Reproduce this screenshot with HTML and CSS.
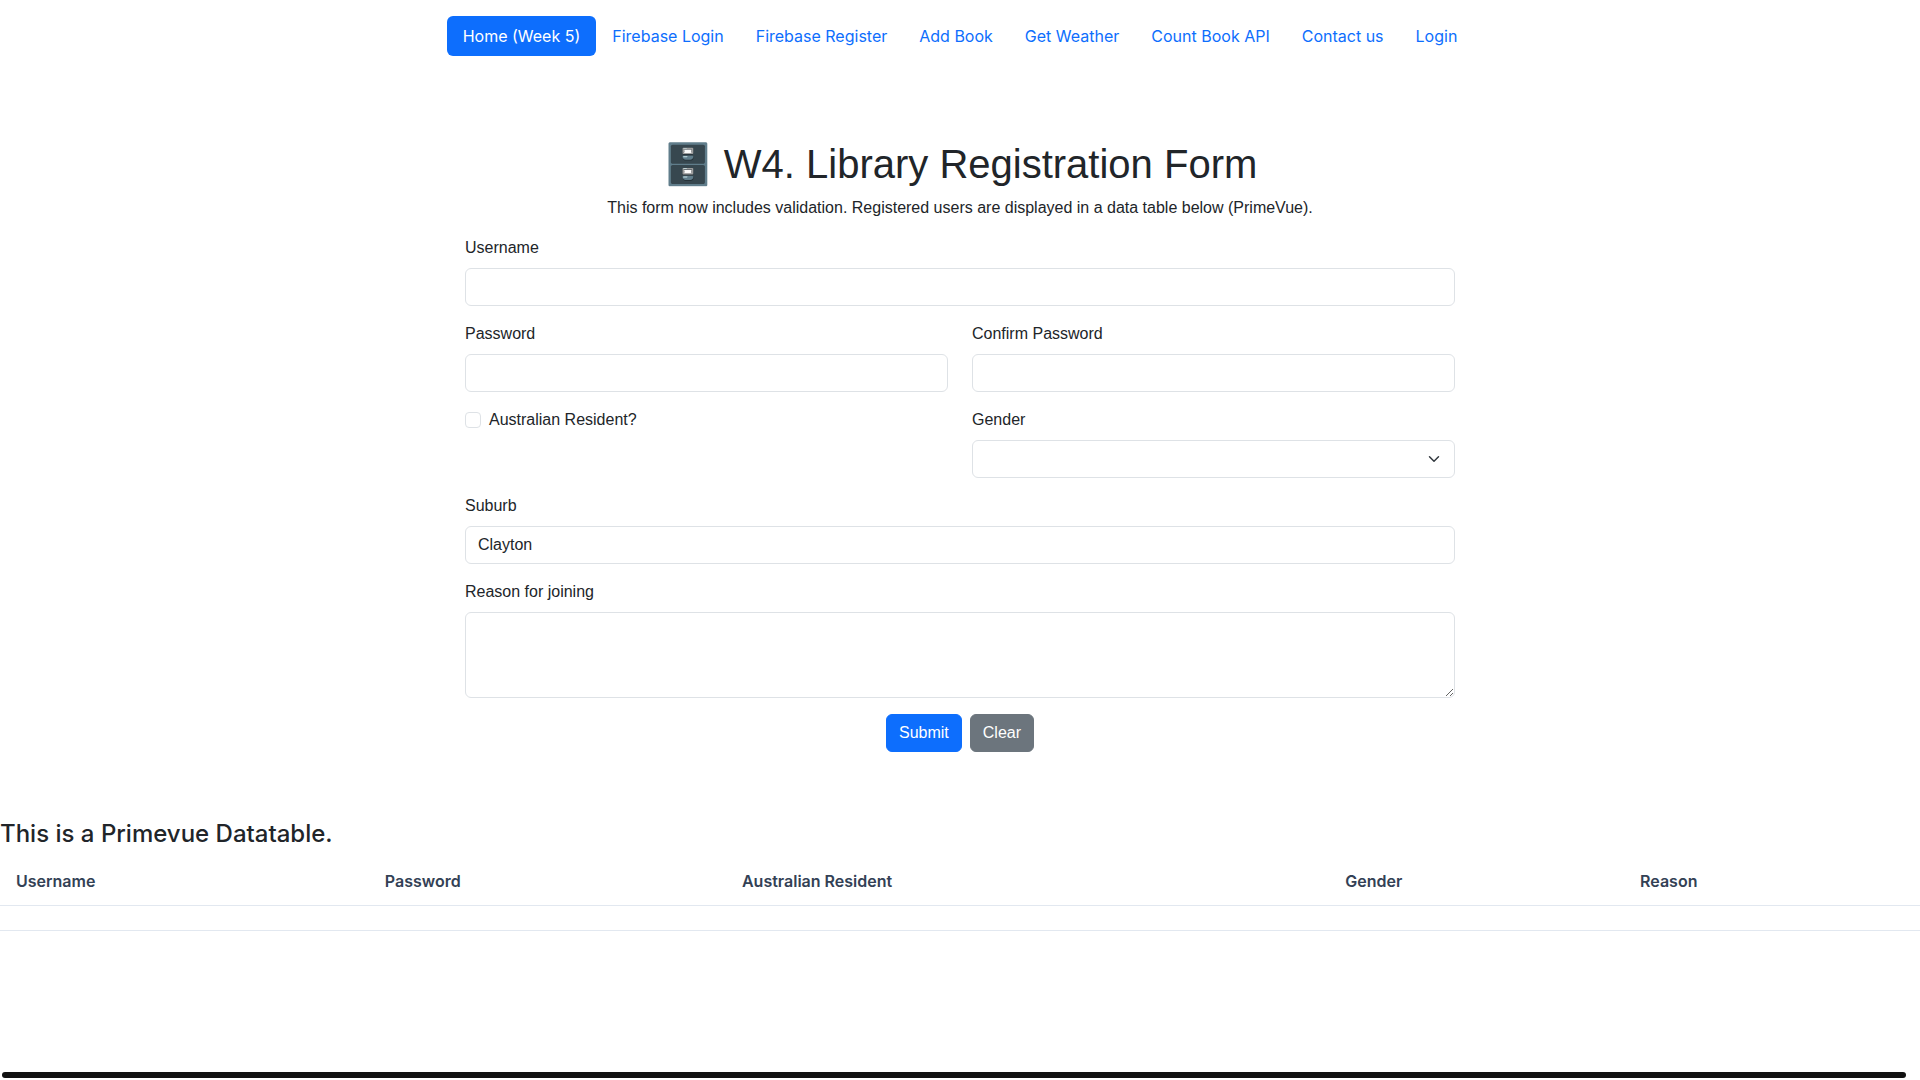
FILE: index.html
```html
<!DOCTYPE html>
<html lang="en">
<head>
  <meta charset="UTF-8" />
  <meta name="viewport" content="width=device-width, initial-scale=1.0" />
  <title>Library Registration Form</title>
  <link rel="stylesheet" href="styles.css">
</head>
<body>
  <header>
    <nav class="nav">
      <a class="nav-link active" href="#" aria-current="page">Home (Week 5)</a>
      <a class="nav-link" href="#">Firebase Login</a>
      <a class="nav-link" href="#">Firebase Register</a>
      <a class="nav-link" href="#">Add Book</a>
      <a class="nav-link" href="#">Get Weather</a>
      <a class="nav-link" href="#">Count Book API</a>
      <a class="nav-link" href="#">Contact us</a>
      <a class="nav-link" href="#">Login</a>
    </nav>
  </header>

  <main>
    <section class="registration">
      <h1>🗄️ W4. Library Registration Form</h1>
      <p class="intro">This form now includes validation. Registered users are displayed in a data table below (PrimeVue).</p>

      <form class="form" onsubmit="return false">
        <div class="field full">
          <label for="username">Username</label>
          <input type="text" class="form-control" id="username">
        </div>

        <div class="field">
          <label for="password">Password</label>
          <input type="password" class="form-control" id="password">
        </div>
        <div class="field">
          <label for="confirm-password">Confirm Password</label>
          <input type="password" class="form-control" id="confirm-password">
        </div>

        <div class="check">
          <input type="checkbox" class="check-input" id="resident">
          <label for="resident">Australian Resident?</label>
        </div>
        <div class="field">
          <label for="gender">Gender</label>
          <select class="form-control form-select" id="gender">
            <option value="" hidden></option>
            <option value="female">Female</option>
            <option value="male">Male</option>
            <option value="other">Other</option>
          </select>
        </div>

        <div class="field full">
          <label for="suburb">Suburb</label>
          <input type="text" class="form-control" id="suburb" value="Clayton">
        </div>

        <div class="field full">
          <label for="reason">Reason for joining</label>
          <textarea class="form-control" id="reason" rows="3"></textarea>
        </div>

        <div class="actions full">
          <button type="submit" class="btn primary">Submit</button>
          <button type="reset" class="btn secondary">Clear</button>
        </div>
      </form>
    </section>

    <section class="users">
      <h4>This is a Primevue Datatable.</h4>
      <table class="datatable">
        <thead>
          <tr>
            <th>Username</th>
            <th>Password</th>
            <th>Australian Resident</th>
            <th>Gender</th>
            <th>Reason</th>
          </tr>
        </thead>
        <tbody>
          <tr>
            <td colspan="5"></td>
          </tr>
        </tbody>
      </table>
    </section>
  </main>

  <div class="scroll-thumb" aria-hidden="true"></div>
</body>
</html>
```

FILE: styles.css
```css
* {
  box-sizing: border-box;
}

body {
  margin: 0;
  background: #fff;
  color: #212529;
  font-family: Inter, sans-serif;
  font-size: 16px;
  line-height: 24px;
  text-rendering: optimizeLegibility;
  -webkit-font-smoothing: antialiased;
}

.nav {
  display: flex;
  flex-wrap: wrap;
  justify-content: center;
  padding: 16px 0;
}

.nav-link {
  padding: 8px 16px;
  border-radius: 6px;
  color: #0d6efd;
  text-decoration: none;
}

.nav-link.active {
  background: #0d6efd;
  color: #fff;
}

/* registration form */
.registration {
  max-width: 1014px;
  margin: 68px auto 0;
  padding: 0 12px;
  font-family: "Liberation Sans", Arial, sans-serif;
}

h1 {
  margin: 0 0 8px;
  font-size: 40px;
  font-weight: 500;
  line-height: 48px;
  text-align: center;
}

.intro {
  margin: 0 0 16px;
  text-align: center;
}

.form {
  display: grid;
  grid-template-columns: 1fr 1fr;
  gap: 16px 24px;
}

.full {
  grid-column: 1 / -1;
}

.field {
  display: flex;
  flex-direction: column;
  gap: 8px;
}

.form-control {
  display: block;
  width: 100%;
  padding: 6px 12px;
  border: 1px solid #dee2e6;
  border-radius: 6px;
  background-color: #fff;
  color: #212529;
  font: inherit;
}

textarea.form-control {
  resize: vertical;
}

textarea::-webkit-scrollbar {
  width: 8px;
  height: 8px;
}

.form-select {
  height: 38px;
  appearance: none;
  background-image: url("data:image/svg+xml,%3csvg xmlns='http://www.w3.org/2000/svg' viewBox='0 0 16 16'%3e%3cpath fill='none' stroke='%23343a40' stroke-linecap='round' stroke-linejoin='round' stroke-width='2' d='m2 5 6 6 6-6'/%3e%3c/svg%3e");
  background-repeat: no-repeat;
  background-position: right 12px center;
  background-size: 16px 12px;
}

.check {
  display: flex;
  align-items: flex-start;
  gap: 8px;
}

.check-input {
  appearance: none;
  width: 16px;
  height: 16px;
  margin: 4px 0 0;
  border: 1px solid #dee2e6;
  border-radius: 4px;
}

.check-input:checked {
  background: #0d6efd;
  border-color: #0d6efd;
}

.actions {
  display: flex;
  justify-content: center;
  gap: 8px;
}

.btn {
  padding: 6px 12px;
  border: 1px solid transparent;
  border-radius: 6px;
  color: #fff;
  font: inherit;
  cursor: pointer;
}

.btn.primary {
  background: #0d6efd;
  border-color: #0d6efd;
}

.btn.secondary {
  background: #6c757d;
  border-color: #6c757d;
}

/* registered users */
.users {
  margin-top: 67px;
}

h4 {
  margin: 0 0 8px;
  font-size: 24px;
  font-weight: 500;
  line-height: 30px;
}

.datatable {
  width: 100%;
  border-collapse: separate;
  border-spacing: 0;
}

.datatable th,
.datatable td {
  padding: 12px 16px;
  border-bottom: 1px solid #e2e8f0;
  text-align: left;
}

.datatable th {
  color: #334155;
  font-weight: 600;
}

.scroll-thumb {
  position: fixed;
  left: 2px;
  right: 14px;
  bottom: 2px;
  height: 6px;
  border-radius: 3px;
  background: #111;
}
```
